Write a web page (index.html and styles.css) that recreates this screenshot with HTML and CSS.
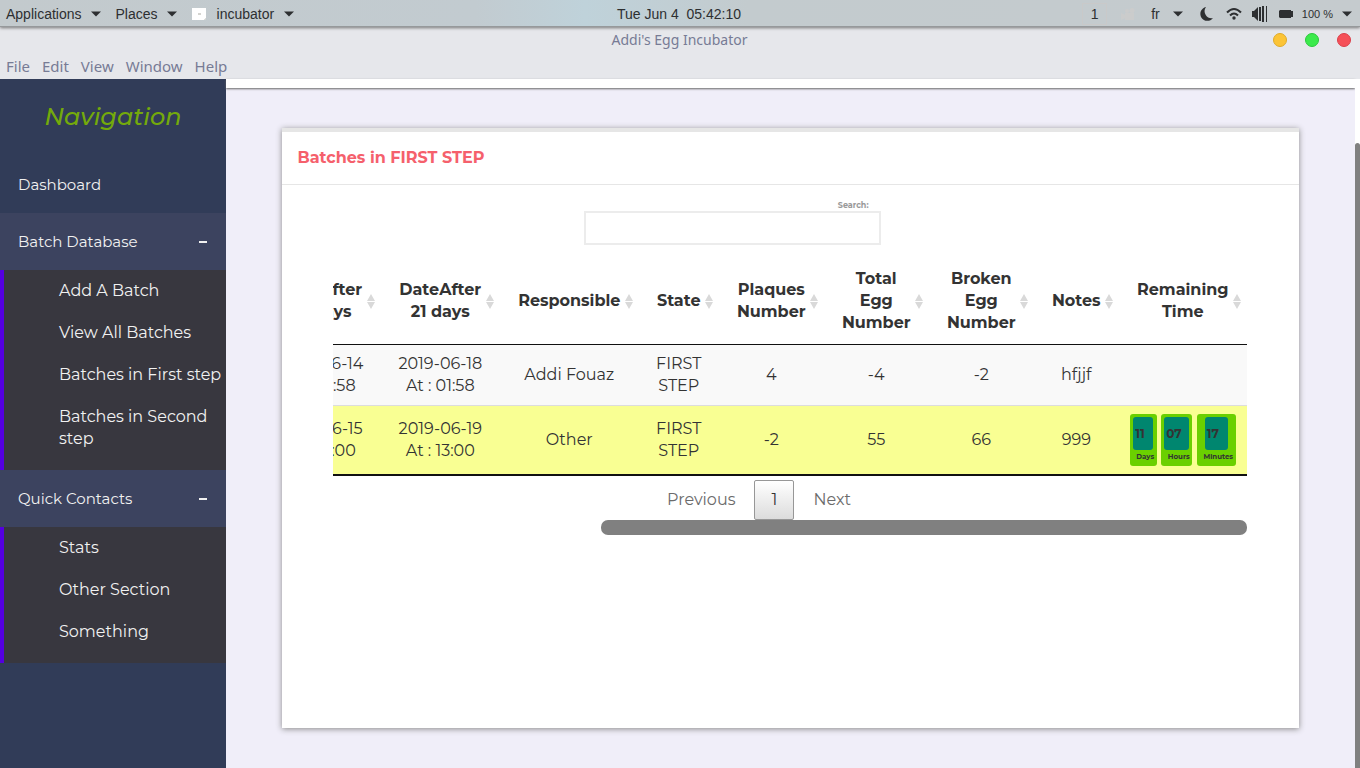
FILE: index.html
```html
<!DOCTYPE html>
<html lang="en">
<head>
<meta charset="utf-8">
<title>Addi's Egg Incubator</title>
<link rel="stylesheet" href="styles.css">
</head>
<body>
<svg width="0" height="0" hidden>
  <symbol id="caret" viewBox="0 0 10 6"><path d="M0 0.5h10L5 5.5z"/></symbol>
  <symbol id="sort" viewBox="0 0 8 15"><path d="M4 0l4 7H0zM4 15l4-7H0z"/></symbol>
</svg>

<header class="panel">
  <div class="panel-left">
    <button class="panel-item">Applications <svg class="caret"><use href="#caret"/></svg></button>
    <button class="panel-item">Places <svg class="caret"><use href="#caret"/></svg></button>
    <button class="panel-item app"><svg class="app-icon" viewBox="0 0 14 12"><path fill="#fff" d="M0 0h14v10l-2 2H0z"/><path fill="#d4d4d0" d="M6 5h3v2H6zM12 12l2-2v2z"/></svg><span>incubator</span> <svg class="caret"><use href="#caret"/></svg></button>
  </div>
  <time class="clock">Tue Jun 4&nbsp; 05:42:10</time>
  <div class="panel-right">
    <span class="workspace">1</span>
    <svg class="ghost" viewBox="0 0 16 12"><path d="M0 5l4 2V5h9v7H4v-2l-4 2z"/><circle cx="6" cy="3" r="2"/><circle cx="11" cy="2.500" r="2.500"/></svg>
    <button class="panel-item lang">fr <svg class="caret"><use href="#caret"/></svg></button>
    <svg class="moon" viewBox="0 0 13 14"><path d="M6 0a7 7 0 1 0 7 11A7 7 0 0 1 6 0z"/></svg>
    <svg class="wifi" viewBox="0 0 16 13"><g fill="none" stroke="#2d2f31" stroke-width="2"><path d="M1 5.500Q8-1.500 15 5.500"/><path d="M4 8.500Q8 4.500 12 8.500"/></g><circle cx="8" cy="11" r="1.700"/></svg>
    <svg class="volume" viewBox="0 0 16 16"><path d="M0 5h2l4-4v14l-4-4H0zM7 1h2v14H7zM10 0h2v16h-2zM14 0h1v16h-1z"/></svg>
    <svg class="battery" viewBox="0 0 14 8"><path d="M1 0h11v1h2v6h-2v1H1L0 7V1z"/></svg>
    <button class="panel-item percent">100 % <svg class="caret"><use href="#caret"/></svg></button>
  </div>
</header>

<div class="titlebar">
  <span></span>
  <span>Addi's Egg Incubator</span>
  <div class="window-buttons">
    <button class="dot minimize" aria-label="Minimize"></button>
    <button class="dot maximize" aria-label="Maximize"></button>
    <button class="dot close" aria-label="Close"></button>
  </div>
</div>
<nav class="menubar">
  <button>File</button><button>Edit</button><button>View</button><button>Window</button><button>Help</button>
</nav>

<div class="app-body">
  <aside class="sidebar">
    <h2 class="brand">Navigation</h2>
    <a class="nav-link" href="#">Dashboard</a>
    <button class="nav-link open">Batch Database<span class="minus"></span></button>
    <ul class="submenu">
      <li><a href="#">Add A Batch</a></li>
      <li><a href="#">View All Batches</a></li>
      <li><a href="#">Batches in First step</a></li>
      <li><a href="#">Batches in Second step</a></li>
    </ul>
    <button class="nav-link open">Quick Contacts<span class="minus"></span></button>
    <ul class="submenu">
      <li><a href="#">Stats</a></li>
      <li><a href="#">Other Section</a></li>
      <li><a href="#">Something</a></li>
    </ul>
  </aside>

  <main class="content">
    <div class="topstrip"></div>
    <section class="card">
      <h1 class="card-title">Batches in FIRST STEP</h1>
      <div class="card-body">
        <div class="filter">
          <div class="filter-box">
            <label for="search">Search:</label>
            <input id="search" type="search">
          </div>
        </div>
        <div class="table-scroll">
          <table class="batches">
            <colgroup><col class="c-date"><col class="c-date"><col class="c-resp"><col class="c-state"><col class="c-num"><col class="c-num"><col class="c-num"><col class="c-notes"><col class="c-time"></colgroup>
            <thead>
              <tr>
                <th><button><span>DateAfter<br>14 days</span><svg><use href="#sort"/></svg></button></th>
                <th><button><span>DateAfter<br>21 days</span><svg><use href="#sort"/></svg></button></th>
                <th><button><span>Responsible</span><svg><use href="#sort"/></svg></button></th>
                <th><button><span>State</span><svg><use href="#sort"/></svg></button></th>
                <th><button><span>Plaques<br>Number</span><svg><use href="#sort"/></svg></button></th>
                <th><button><span>Total<br>Egg<br>Number</span><svg><use href="#sort"/></svg></button></th>
                <th><button><span>Broken<br>Egg<br>Number</span><svg><use href="#sort"/></svg></button></th>
                <th><button><span>Notes</span><svg><use href="#sort"/></svg></button></th>
                <th><button><span>Remaining<br>Time</span><svg><use href="#sort"/></svg></button></th>
              </tr>
            </thead>
            <tbody>
              <tr>
                <td>2019-06-14<br>At : 01:58</td><td>2019-06-18<br>At : 01:58</td><td>Addi Fouaz</td><td>FIRST<br>STEP</td><td>4</td><td>-4</td><td>-2</td><td>hfjjf</td><td></td>
              </tr>
              <tr class="highlight">
                <td>2019-06-15<br>At : 13:00</td><td>2019-06-19<br>At : 13:00</td><td>Other</td><td>FIRST<br>STEP</td><td>-2</td><td>55</td><td>66</td><td>999</td>
                <td class="time-cell">
                  <div class="countdown">
                    <div class="unit days"><span class="value">11</span><span class="name">Days</span></div>
                    <div class="unit hours"><span class="value">07</span><span class="name">Hours</span></div>
                    <div class="unit minutes"><span class="value">17</span><span class="name">Minutes</span></div>
                  </div>
                </td>
              </tr>
            </tbody>
          </table>
        </div>
        <div class="pagination">
          <button>Previous</button>
          <button class="current">1</button>
          <button>Next</button>
        </div>
        <div class="scroll-track"><div class="scroll-thumb"></div></div>
      </div>
    </section>
  </main>
  <div class="page-scroll"><div class="page-thumb"></div></div>
</div>
</body>
</html>
```
FILE: styles.css
```css
* { box-sizing: border-box; }

body {
  margin: 0;
  height: 100vh;
  display: flex;
  flex-direction: column;
  overflow: hidden;
  font-family: Montserrat, Inter, sans-serif;
  font-size: 16px;
  line-height: 22px;
  color: #333;
}

button {
  margin: 0;
  padding: 0;
  border: 0;
  background: none;
  font: inherit;
  color: inherit;
}

a { color: inherit; text-decoration: none; }

/* Desktop panel */
.panel {
  flex: none;
  display: grid;
  grid-template-columns: 1fr auto 1fr;
  align-items: center;
  height: 27px;
  padding: 1px 8px 0 6px;
  background: linear-gradient(90deg, #c3cacd, #c2cbd0 35%, #bfd2da 43%, #c3cbce 55%, #c5cbce);
  border-bottom: 1px solid #96999b;
  box-shadow: 0 1px 3px #777;
  font-family: "Liberation Sans", Arial, sans-serif;
  font-size: 14px;
  color: #2d2f31;
  position: relative;
}
.panel svg { fill: #2d2f31; }
.panel-left, .panel-right { display: flex; align-items: center; }
.panel-left { gap: 15px; }
.panel-right { justify-content: flex-end; }
.panel-item { display: flex; align-items: center; gap: 9px; }
.caret { width: 10px; height: 6px; }
.app-icon { width: 14px; height: 12px; }
.workspace {
  width: 25px;
  margin-right: 14px;
  border: 1px solid #c9c9c9;
  text-align: center;
  line-height: 20px;
}
.panel .ghost { width: 16px; height: 12px; margin-right: 14px; fill: #cbcccc; }
.lang { gap: 13px; margin-right: 17px; }
.moon { width: 13px; height: 14px; margin-right: 13px; }
.wifi { width: 16px; height: 13px; margin-right: 10px; }
.volume { width: 16px; height: 16px; margin-right: 11px; }
.battery { width: 14px; height: 8px; margin-right: 9px; }
.percent { font-size: 11px; }

/* Window chrome */
.titlebar, .menubar {
  flex: none;
  background: #e6e7eb;
  font-family: "Noto Sans", sans-serif;
  font-size: 14px;
  color: #777b95;
}
.titlebar {
  display: grid;
  grid-template-columns: 1fr auto 1fr;
  align-items: center;
  height: 26px;
  padding: 0 9px 0 8px;
}
.window-buttons { display: flex; justify-content: flex-end; gap: 18px; }
.dot { width: 14px; height: 14px; border-radius: 50%; border: 1px solid; }
.minimize { background: #fcc436; border-color: #dfab29; }
.maximize { background: #3bea4b; border-color: #2bc93b; }
.close { background: #f55058; border-color: #db3f49; }
.menubar { display: flex; align-items: center; gap: 12px; height: 26px; padding: 0 6px; font-size: 15px; }
.app .caret { margin-left: 1px; }
.app span { margin-left: 2px; }

/* Application */
.app-body { flex: 1; display: flex; min-height: 0; }

.sidebar {
  flex: none;
  width: 226px;
  background: #313c58;
  color: #f1f1f1;
  overflow: hidden;
}
.brand {
  margin: 0;
  padding: 22px 0 23px;
  text-align: center;
  font-size: 24px;
  line-height: 32px;
  font-style: italic;
  font-weight: 500;
  color: #74aa0b;
}
.nav-link {
  display: flex;
  align-items: center;
  justify-content: space-between;
  width: 100%;
  height: 57px;
  padding: 0 19px 0 18px;
  font-size: 15px;
}
.nav-link.open { background: #3c435f; }
.minus { width: 8px; height: 2px; background: #f1f1f1; }
.submenu {
  margin: 0;
  padding: 0 0 10px;
  list-style: none;
  background: #38373f;
  border-left: 4px solid #5400e0;
}
.submenu a { display: block; padding: 10px 0 10px 55px; }

.content { flex: 1; min-width: 0; background: #f0eef9; }
.topstrip {
  height: 9px;
  background: #fff;
  box-shadow: 0 1px 2px #666;
}
.card {
  margin: 40px 5% 0;
  min-height: 600px;
  background: #fff;
  border-top: 4px solid #e6e6e6;
  box-shadow: 0 1px 6px #888;
}
.card-title {
  margin: 0;
  padding: 15px 15px;
  border-bottom: 1px solid #e6e6e6;
  font-size: 16px;
  font-weight: 700;
  color: #f5606c;
}
.card-body { padding: 14px 5% 0; padding-right: calc(5% + 1px); }

.filter { display: flex; justify-content: center; padding-right: 116px; }
.filter-box { display: flex; flex-direction: column; width: 297px; }
.filter-box label {
  padding-right: 12px;
  text-align: right;
  font-size: 8px;
  line-height: 12px;
  font-weight: 700;
  color: #999;
}
.filter-box input {
  width: 100%;
  height: 34px;
  border: 2px solid #ececec;
  background: #fff;
  font: inherit;
}

/* The table is wider than its viewport and shows its right end */
.table-scroll { display: flex; justify-content: flex-end; overflow: hidden; margin-top: 12px; }
.batches {
  flex: none;
  table-layout: fixed;
  width: 985px;
  border-collapse: separate;
  border-spacing: 0;
  border-bottom: 2px solid #111;
}
.c-date { width: 119px; }
.c-resp { width: 139px; }
.c-state { width: 80px; }
.c-num { width: 105px; }
.c-notes { width: 85px; }
.c-time { width: 128px; }

.batches th { padding: 11px 6px 10px 18px; border-bottom: 1px solid #111; }
.batches th button { display: flex; align-items: center; width: 100%; font-weight: 700; }
.batches th span { flex: 1; margin-right: 4px; white-space: nowrap; }
.batches th svg { flex: none; width: 8px; height: 15px; fill: #d9d9d9; }
.batches td { padding: 8px 10px; text-align: center; background: #f9f9f9; }
.batches .highlight td { border-top: 1px solid #ddd; background: #f9ff93; }

.batches .time-cell { padding: 8px 11px; }
.countdown { display: flex; justify-content: space-between; }
.unit {
  display: flex;
  flex-direction: column;
  align-items: center;
  height: 52px;
  padding: 3px 0;
  border-radius: 3px;
  background: #6ad000;
  font-weight: 700;
}
.value {
  height: 33px;
  padding-left: 2px;
  border-radius: 3px;
  background: #00866f;
  font-size: 12px;
  line-height: 33px;
  text-align: left;
}
.name { padding-left: 4px; font-size: 7px; line-height: 14px; }
.days { width: 27px; }
.days .value { width: 20px; }
.hours { width: 31px; }
.hours .value { width: 25px; }
.minutes { width: 39px; }
.minutes .value { width: 23px; }

.pagination {
  display: flex;
  justify-content: center;
  gap: 19px;
  padding: 4px 62px 0 0;
  color: #6b6b6b;
}
.pagination .current {
  width: 40px;
  height: 40px;
  border: 1px solid #979797;
  border-radius: 2px;
  background: linear-gradient(#fff, #dcdcdc);
  color: #333;
}
.scroll-track { display: flex; justify-content: flex-end; }
.scroll-thumb { width: 70.7%; height: 15px; border-radius: 7px; background: #808080; }

.page-scroll { flex: none; width: 5px; padding-top: 64px; background: #fff; }
.page-thumb { height: 100%; border-radius: 3px 3px 0 0; background: #808080; }
```
